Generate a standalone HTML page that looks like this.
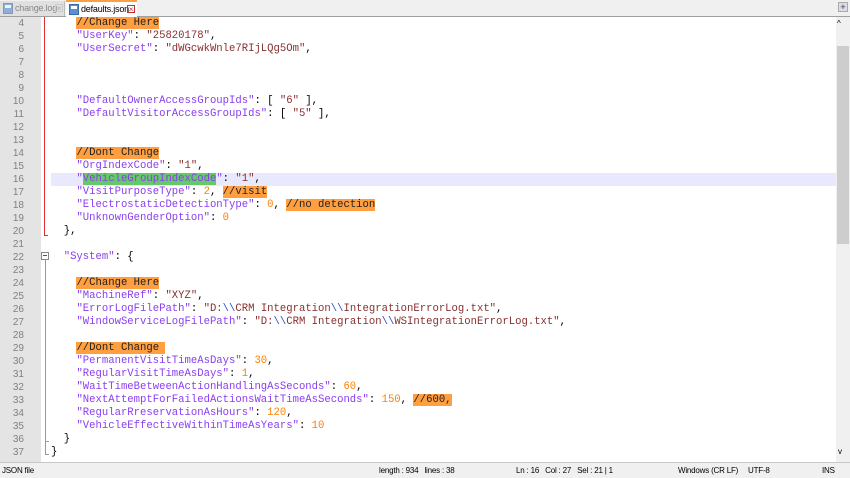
<!DOCTYPE html>
<html><head><meta charset="utf-8"><style>
body{margin:0;width:850px;height:477px;overflow:hidden;background:#fff;font-family:"Liberation Sans",sans-serif;position:relative}
#tabs{position:absolute;left:0;top:0;width:850px;height:16px;background:#f0f0f0;border-bottom:1px solid #a0a0a0}
.tab{position:absolute;top:1px;height:15px;font-size:9px;line-height:15px;letter-spacing:-0.2px}
.ico{position:absolute;left:3px;top:2px;width:10px;height:11px;background:#5b8fd0;border:1px solid #3a6aa8;box-sizing:border-box}
.ico:after{content:"";position:absolute;left:1px;top:1px;width:6px;height:3px;background:#fff}
.x{position:absolute;top:3px;width:8px;height:8px;font-size:8px;line-height:7px;text-align:center;border:1px solid #999;box-sizing:border-box}
#gut{position:absolute;left:0;top:17px;width:41px;height:445px;background:#e4e4e4}
#fold{position:absolute;left:41px;top:17px;width:10px;height:445px;background:#fff}
.ln{position:absolute;left:0;width:24px;text-align:right;font-size:10px;color:#808080;height:13px;line-height:13px}
.l{position:absolute;left:51px;white-space:pre;font-family:"Liberation Mono",monospace;font-size:10.6px;height:13px;line-height:13px;color:#000}
.k{color:#8a3ef0}.s{color:#883030}.n{color:#ff8000}.e{color:#3050c0}
.c{background:#ff9f40;color:#222}
.sel{background:#66c86a}
#scroll{position:absolute;left:836px;top:17px;width:14px;height:445px;background:#f0f0f0}
#status{position:absolute;left:0;top:462px;width:850px;height:15px;background:#f0f0f0;border-top:1px solid #c8c8c8;font-size:8px;line-height:15px;color:#000}
#status span{position:absolute;top:0;letter-spacing:-0.2px}
</style></head><body>
<div id="tabs">
 <div class="tab" style="left:0;width:64px;background:#e0e0e0;color:#888;border-right:1px solid #bbb"><div class="ico" style="opacity:.6"></div><span style="position:absolute;left:15px">change.log</span><div class="x" style="left:55px;color:#aaa;border-color:#ccc">×</div></div>
 <div class="tab" style="left:66px;width:71px;background:#fff;border-top:2px solid #f9a040;top:0;height:16px"><div class="ico"></div><span style="position:absolute;left:15px;top:0">defaults.json</span><div class="x" style="left:61px;color:#c03030;border-color:#c03030">×</div></div>
 <div style="position:absolute;left:838px;top:2px;width:10px;height:10px;background:#ddd;border:1px solid #aaa;box-sizing:border-box;font-size:9px;line-height:8px;text-align:center;color:#336">+</div>
</div>
<div id="gut"></div><div id="fold"></div>
<div style="position:absolute;left:44px;top:17px;width:1px;height:219px;background:#e03030"></div>
<div style="position:absolute;left:44px;top:235px;width:4px;height:1px;background:#e03030"></div>
<div style="position:absolute;left:41px;top:252px;width:8px;height:8px;border:1px solid #888;box-sizing:border-box;background:#fff"></div>
<div style="position:absolute;left:43px;top:255px;width:4px;height:1px;background:#555"></div>
<div style="position:absolute;left:45px;top:260px;width:1px;height:195px;background:#999"></div>
<div style="position:absolute;left:45px;top:441px;width:4px;height:1px;background:#999"></div>
<div style="position:absolute;left:45px;top:454px;width:4px;height:1px;background:#999"></div>
<div style="position:absolute;left:51px;top:173px;width:785px;height:13px;background:#e8e8ff"></div>
<div id="scroll"><div style="position:absolute;left:1px;top:2px;font-size:8px">^</div><div style="position:absolute;left:1px;top:29px;width:12px;height:198px;background:#cdcdcd"></div><div style="position:absolute;left:2px;top:430px;font-size:8px">v</div></div>
<div id="lines"></div>
<div id="status"><span style="left:2px">JSON file</span><span style="left:379px">length : 934&nbsp;&nbsp;&nbsp;lines : 38</span><span style="left:516px">Ln : 16&nbsp;&nbsp;&nbsp;Col : 27&nbsp;&nbsp;&nbsp;Sel : 21 | 1</span><span style="left:678px">Windows (CR LF)</span><span style="left:748px">UTF-8</span><span style="left:822px">INS</span></div>
<script>
var L=[
'    <span class="c">//Change Here</span>',
'    <span class="k">"UserKey"</span>: <span class="s">"25820178"</span>,',
'    <span class="k">"UserSecret"</span>: <span class="s">"dWGcwkWnle7RIjLQg5Om"</span>,',
'','','',
'    <span class="k">"DefaultOwnerAccessGroupIds"</span>: [ <span class="s">"6"</span> ],',
'    <span class="k">"DefaultVisitorAccessGroupIds"</span>: [ <span class="s">"5"</span> ],',
'','',
'    <span class="c">//Dont Change</span>',
'    <span class="k">"OrgIndexCode"</span>: <span class="s">"1"</span>,',
'    <span class="k">"<span class="sel">VehicleGroupIndexCode</span>"</span>: <span class="s">"1"</span>,',
'    <span class="k">"VisitPurposeType"</span>: <span class="n">2</span>, <span class="c">//visit</span>',
'    <span class="k">"ElectrostaticDetectionType"</span>: <span class="n">0</span>, <span class="c">//no detection</span>',
'    <span class="k">"UnknownGenderOption"</span>: <span class="n">0</span>',
'  },',
'',
'  <span class="k">"System"</span>: {',
'',
'    <span class="c">//Change Here</span>',
'    <span class="k">"MachineRef"</span>: <span class="s">"XYZ"</span>,',
'    <span class="k">"ErrorLogFilePath"</span>: <span class="s">"D:<span class="e">\\\\</span>CRM Integration<span class="e">\\\\</span>IntegrationErrorLog.txt"</span>,',
'    <span class="k">"WindowServiceLogFilePath"</span>: <span class="s">"D:<span class="e">\\\\</span>CRM Integration<span class="e">\\\\</span>WSIntegrationErrorLog.txt"</span>,',
'',
'    <span class="c">//Dont Change </span>',
'    <span class="k">"PermanentVisitTimeAsDays"</span>: <span class="n">30</span>,',
'    <span class="k">"RegularVisitTimeAsDays"</span>: <span class="n">1</span>,',
'    <span class="k">"WaitTimeBetweenActionHandlingAsSeconds"</span>: <span class="n">60</span>,',
'    <span class="k">"NextAttemptForFailedActionsWaitTimeAsSeconds"</span>: <span class="n">150</span>, <span class="c">//600,</span>',
'    <span class="k">"RegularRreservationAsHours"</span>: <span class="n">120</span>,',
'    <span class="k">"VehicleEffectiveWithinTimeAsYears"</span>: <span class="n">10</span>',
'  }',
'}'];
var h='';
for(var i=0;i<L.length;i++){var t=17+i*13;h+='<div class="ln" style="top:'+t+'px">'+(i+4)+'</div><div class="l" style="top:'+t+'px">'+L[i]+'</div>';}
document.getElementById('lines').innerHTML=h;
</script>
</body></html>
